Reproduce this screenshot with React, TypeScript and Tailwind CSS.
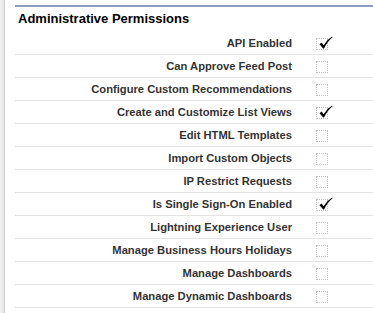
const permissions: { label: string; checked: boolean }[] = [
  { label: 'API Enabled', checked: true },
  { label: 'Can Approve Feed Post', checked: false },
  { label: 'Configure Custom Recommendations', checked: false },
  { label: 'Create and Customize List Views', checked: true },
  { label: 'Edit HTML Templates', checked: false },
  { label: 'Import Custom Objects', checked: false },
  { label: 'IP Restrict Requests', checked: false },
  { label: 'Is Single Sign-On Enabled', checked: true },
  { label: 'Lightning Experience User', checked: false },
  { label: 'Manage Business Hours Holidays', checked: false },
  { label: 'Manage Dashboards', checked: false },
  { label: 'Manage Dynamic Dashboards', checked: false },
]

function CheckMark() {
  return (
    <svg
      viewBox="0 0 14 14"
      className="absolute left-[2px] top-[-3px] h-[14px] w-[14px]"
    >
      <path
        d="M0.5 8.2 L2.6 6.6 L4.6 9.2 Q8 3.5 13.2 0.6 L13.6 1.3 Q8.6 5.2 5 12.6 L4.2 12.6 Z"
        fill="#000"
      />
    </svg>
  )
}

function PermissionRow({ label, checked }: { label: string; checked: boolean }) {
  return (
    <div className="flex h-[23px] items-center border-b border-[#e3e3e3]">
      <div className="w-[277px] text-right text-[11.2px] font-bold text-[#333]">
        {label}
      </div>
      <div className="ml-[24px] flex items-center pt-[2px]">
        <div className="relative h-[12px] w-[12px] border border-dotted border-[#c4c4c4]">
          {checked && <CheckMark />}
        </div>
      </div>
    </div>
  )
}

export default function App() {
  return (
    <div
      className="flex h-[313px] w-[373px] overflow-hidden bg-white"
      style={{ fontFamily: '"Liberation Sans", Arial, sans-serif' }}
    >
      {/* Left page edge */}
      <div className="w-[5px] shrink-0 bg-gradient-to-r from-[#f3f3f3] to-[#e4e4e4] border-r border-[#d4d4d4]" />

      <div className="ml-[10px] flex-1 pt-[5px]">
        {/* Section header */}
        <div className="h-[27px] border-t-2 border-[#8e9dbe] pl-[3px] pt-[4px]">
          <h3 className="text-[13px] font-bold leading-[16px] text-black">
            Administrative Permissions
          </h3>
        </div>

        {permissions.map((p) => (
          <PermissionRow key={p.label} label={p.label} checked={p.checked} />
        ))}
      </div>
    </div>
  )
}
